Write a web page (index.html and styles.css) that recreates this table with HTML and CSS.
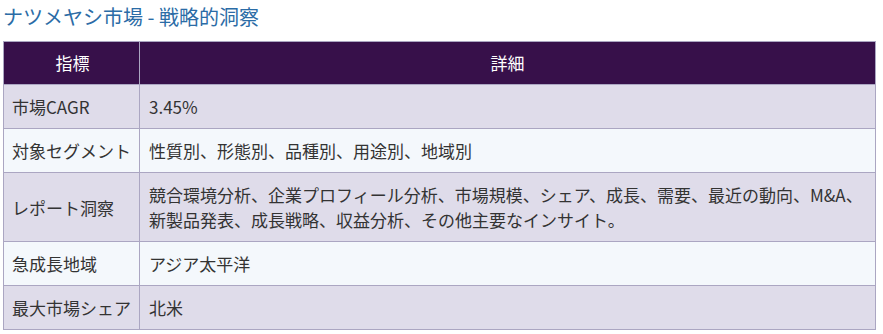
FILE: index.html
```html
<!DOCTYPE html>
<html lang="ja">
<head>
<meta charset="utf-8">
<title>ナツメヤシ市場 - 戦略的洞察</title>
<link rel="stylesheet" href="styles.css">
</head>
<body>
<div class="page">
  <h2 class="title">ナツメヤシ市場 - 戦略的洞察</h2>
  <table class="insights">
    <thead>
      <tr><th class="col-key">指標</th><th>詳細</th></tr>
    </thead>
    <tbody>
      <tr class="odd"><td class="key">市場CAGR</td><td>3.45%</td></tr>
      <tr class="even"><td class="key">対象セグメント</td><td>性質別、形態別、品種別、用途別、地域別</td></tr>
      <tr class="odd"><td class="key">レポート洞察</td><td>競合環境分析、企業プロフィール分析、市場規模、シェア、成長、需要、最近の動向、M&amp;A、新製品発表、成長戦略、収益分析、その他主要なインサイト。</td></tr>
      <tr class="even"><td class="key">急成長地域</td><td>アジア太平洋</td></tr>
      <tr class="odd"><td class="key">最大市場シェア</td><td>北米</td></tr>
    </tbody>
  </table>
</div>
</body>
</html>
```
FILE: styles.css
```css
html, body {
  margin: 0;
  padding: 0;
  background: #ffffff;
}
.page {
  padding: 3px 3px 0 3px;
  font-family: "Noto Sans CJK JP", "Noto Sans", sans-serif;
  color: #333333;
}
.title {
  margin: 0 0 10px 0;
  font-size: 20px;
  font-weight: 400;
  line-height: 28px;
  color: #2b6ca6;
}
.insights {
  width: 873px;
  border-collapse: collapse;
  font-size: 17px;
  line-height: 25px;
}
.insights th,
.insights td {
  border: 1px solid #aba6c2;
  padding: 9px 9px 9px 9px;
  text-align: left;
  vertical-align: middle;
}
.insights th {
  background: #37104a;
  color: #ffffff;
  font-weight: 400;
  text-align: center;
  padding: 8px 9px 9px 9px;
}
.insights .col-key {
  width: 119px;
  padding-left: 9px;
  padding-right: 7px;
  white-space: nowrap;
}
.insights td.key {
  padding-left: 8px;
  padding-right: 7px;
  white-space: nowrap;
}
.insights tr.odd td {
  background: #dfdcea;
}
.insights tr.even td {
  background: #f4f8fc;
}
```
